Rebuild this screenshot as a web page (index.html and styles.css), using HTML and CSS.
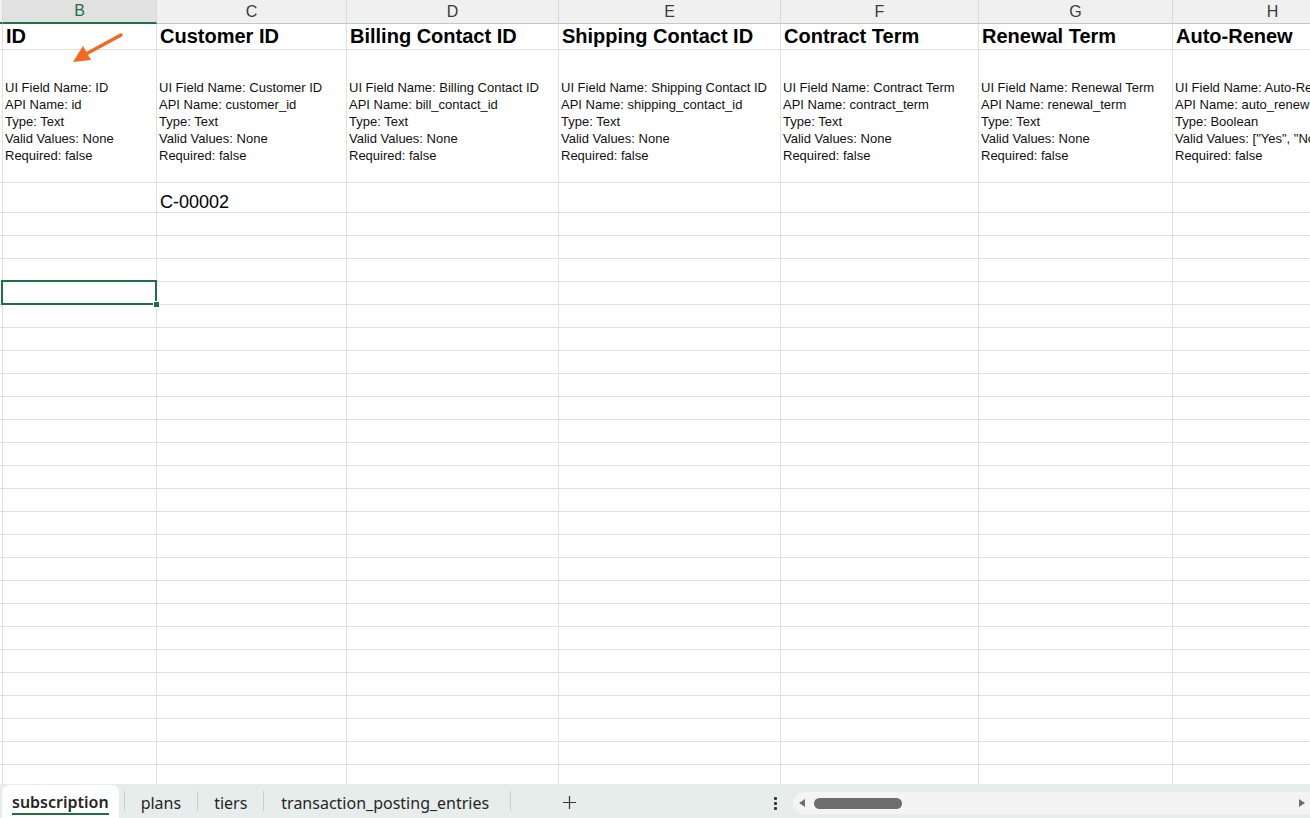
FILE: index.html
```html
<!DOCTYPE html>
<html lang="en">
<head>
  <meta charset="UTF-8">
  <meta name="viewport" content="width=device-width, initial-scale=1.0">
  <title>subscription</title>
  <link rel="stylesheet" href="styles.css">
</head>
<body>
  <div class="sheet">
    <div class="grid" id="grid">
      <!-- column letters -->
      <div class="cell a col"></div>
      <div class="cell col active">B</div>
      <div class="cell col">C</div>
      <div class="cell col">D</div>
      <div class="cell col">E</div>
      <div class="cell col">F</div>
      <div class="cell col">G</div>
      <div class="cell col">H</div>

      <!-- row 1: field titles -->
      <div class="cell a"></div>
      <div class="cell title">ID</div>
      <div class="cell title">Customer ID</div>
      <div class="cell title">Billing Contact ID</div>
      <div class="cell title">Shipping Contact ID</div>
      <div class="cell title">Contract Term</div>
      <div class="cell title">Renewal Term</div>
      <div class="cell title">Auto-Renew</div>

      <!-- row 2: field descriptions -->
      <div class="cell a"></div>
      <div class="cell desc">UI Field Name: ID<br>API Name: id<br>Type: Text<br>Valid Values: None<br>Required: false</div>
      <div class="cell desc">UI Field Name: Customer ID<br>API Name: customer_id<br>Type: Text<br>Valid Values: None<br>Required: false</div>
      <div class="cell desc">UI Field Name: Billing Contact ID<br>API Name: bill_contact_id<br>Type: Text<br>Valid Values: None<br>Required: false</div>
      <div class="cell desc">UI Field Name: Shipping Contact ID<br>API Name: shipping_contact_id<br>Type: Text<br>Valid Values: None<br>Required: false</div>
      <div class="cell desc">UI Field Name: Contract Term<br>API Name: contract_term<br>Type: Text<br>Valid Values: None<br>Required: false</div>
      <div class="cell desc">UI Field Name: Renewal Term<br>API Name: renewal_term<br>Type: Text<br>Valid Values: None<br>Required: false</div>
      <div class="cell desc">UI Field Name: Auto-Renew<br>API Name: auto_renew<br>Type: Boolean<br>Valid Values: ["Yes", "No"]<br>Required: false</div>

      <!-- row 3: data -->
      <div class="cell a"></div>
      <div class="cell val"></div>
      <div class="cell val">C-00002</div>
      <div class="cell val"></div>
      <div class="cell val"></div>
      <div class="cell val"></div>
      <div class="cell val"></div>
      <div class="cell val"></div>
    </div>

    <svg class="arrow" viewBox="0 0 130 70">
      <line x1="121" y1="35" x2="86" y2="54" stroke="#f26a21" stroke-width="3.4" stroke-linecap="round"/>
      <polygon points="73,62 91,60 83,46" fill="#f26a21"/>
    </svg>
  </div>

  <div class="tabbar">
    <div class="tabs">
      <div class="tab active"><span>subscription</span></div>
      <div class="sep first"></div>
      <div class="tab">plans</div>
      <div class="sep"></div>
      <div class="tab">tiers</div>
      <div class="sep"></div>
      <div class="tab last">transaction_posting_entries</div>
      <div class="sep"></div>
      <svg class="add" viewBox="0 0 16 16">
        <path d="M8 1v14M1 8h14" stroke="#333" stroke-width="1.3" fill="none"/>
      </svg>
    </div>
    <div class="more">
      <i></i><i></i><i></i>
    </div>
    <div class="hscroll">
      <svg class="arr" viewBox="0 0 8 10"><path d="M7 1v8L1 5z" fill="#6e6e6e"/></svg>
      <div class="thumb"></div>
      <svg class="arr right" viewBox="0 0 8 10"><path d="M1 1v8l6-4z" fill="#6e6e6e"/></svg>
    </div>
  </div>

  <script>
    // empty rows below the data, with the active cell in column B
    const colCount = 8;
    const emptyRows = 25;
    const grid = document.getElementById("grid");

    for (let r = 0; r < emptyRows; r++) {
      for (let c = 0; c < colCount; c++) {
        const cell = document.createElement("div");
        cell.className = c === 0 ? "cell a" : "cell";
        if (r === 3 && c === 1) cell.classList.add("sel");
        grid.appendChild(cell);
      }
    }
  </script>
</body>
</html>
```

FILE: styles.css
```css
* {
  box-sizing: border-box;
}
body {
  margin: 0;
  height: 818px;
  overflow: hidden;
  background: #fff;
  font-family: "Liberation Sans", Arial, sans-serif;
  color: #000;
}
.sheet {
  position: relative;
  height: 784px;
  overflow: hidden;
}
.grid {
  display: grid;
  grid-template-columns: 3px 154px 190px 212px 222px 198px 194px 200px;
  grid-template-rows: 24px 26px 133px 30px;
  grid-auto-rows: 23px;
}
.cell {
  border-right: 1px solid #e1e1e1;
  border-bottom: 1px solid #e1e1e1;
  padding: 0 3px;
  overflow: hidden;
  white-space: nowrap;
}
.cell.a {
  padding: 0;
}
.col {
  background: #f0f0f0;
  color: #3b3b3b;
  font-size: 16px;
  line-height: 23px;
  text-align: center;
  border-right-color: #d9d9d9;
  border-bottom-color: #c6c6c6;
}
.col.active {
  background: #e1e1e1;
  color: #1e7145;
  line-height: 22px;
  border-bottom: 2px solid #1e7145;
}
.cell.a.col {
  border-bottom: 2px solid #1e7145;
}
.title {
  font-size: 20px;
  font-weight: bold;
  line-height: 25px;
}
.desc {
  font-size: 13px;
  line-height: 17px;
  padding: 29px 2px 0;
  color: #111;
}
.val {
  font-size: 18px;
  line-height: 19px;
  padding-top: 10px;
}
.sel {
  position: relative;
  overflow: visible;
}
.sel::before {
  content: "";
  position: absolute;
  left: -2px;
  top: -2px;
  right: -1px;
  bottom: -1px;
  border: 2px solid #1e7145;
}
.sel::after {
  content: "";
  position: absolute;
  right: -3px;
  bottom: -3px;
  width: 5px;
  height: 5px;
  background: #1e7145;
  box-shadow: 0 0 0 1px #fff;
}
.arrow {
  position: absolute;
  left: 0;
  top: 0;
  width: 130px;
  height: 70px;
}

/* sheet tabs */
.tabbar {
  height: 34px;
  background: #e6edeb;
  display: flex;
  font-family: "Noto Sans", sans-serif;
  font-size: 16px;
  color: #262626;
}
.tabs {
  flex: 1;
  display: flex;
  align-items: center;
  padding-left: 2px;
}
.tab {
  padding: 4px 16px 0;
}
.tab.last {
  padding: 4px 21px 0 17px;
}
.tab.active {
  align-self: stretch;
  margin-top: 1px;
  padding: 0 10px;
  background: #fff;
  border-radius: 8px 8px 0 0;
  font-weight: 600;
  display: flex;
  align-items: center;
}
.tab.active span {
  line-height: 22px;
  border-bottom: 2px solid #1e7145;
  margin-top: 3px;
}
.sep {
  width: 1px;
  height: 20px;
  background: #c8cfcd;
}
.sep.first {
  margin-left: 5px;
}
.add {
  width: 15px;
  height: 15px;
  margin-left: 51px;
  margin-top: 3px;
}
.more {
  display: flex;
  flex-direction: column;
  justify-content: center;
  gap: 2px;
  padding-top: 4px;
  margin-right: 16px;
}
.more i {
  display: block;
  width: 3px;
  height: 3px;
  background: #333;
  border-radius: 1px;
}
.hscroll {
  width: 517px;
  height: 22px;
  margin-top: 8px;
  background: #f4f4f4;
  border-radius: 11px 0 0 11px;
  display: flex;
  align-items: center;
  padding: 0 4px 0 5px;
}
.arr {
  width: 8px;
  height: 10px;
}
.thumb {
  width: 88px;
  height: 11px;
  margin-left: 8px;
  background: #6e6e6e;
  border-radius: 6px;
}
.arr.right {
  margin-left: auto;
}
```
